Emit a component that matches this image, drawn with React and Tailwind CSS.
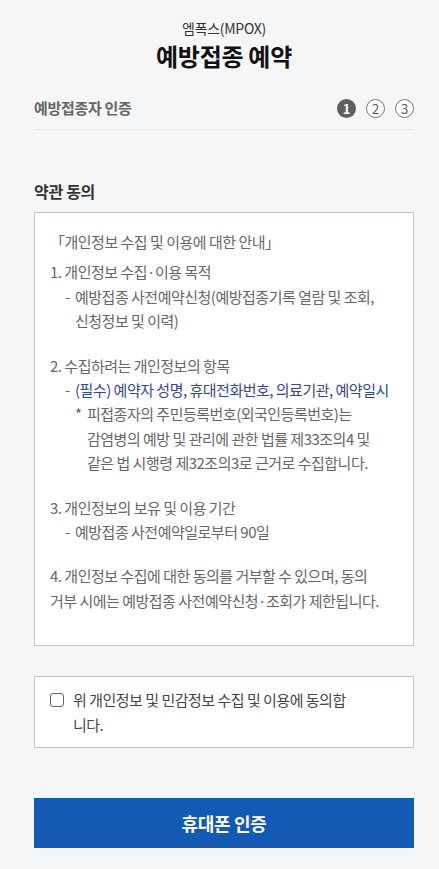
import React from "react";

const font = { fontFamily: '"Noto Sans CJK KR", "Noto Sans", sans-serif' };

function Step({ n, active }) {
  return active ? (
    <span className="flex h-[19px] w-[19px] items-center justify-center rounded-full bg-[#5f5f5f] text-[13px] font-bold leading-none text-white">
      {n}
    </span>
  ) : (
    <span className="flex h-[19px] w-[19px] items-center justify-center rounded-full border border-[#777] bg-white text-[13px] leading-none text-[#555]">
      {n}
    </span>
  );
}

export default function App() {
  return (
    <div
      className="min-h-[869px] w-full bg-[#f5f6f8] pb-[21px] pl-[34px] pr-[25px] pt-[18px] text-[#555]"
      style={font}
    >
      <div className="flex flex-col items-center">
        <div className="text-[14px] leading-[20px] tracking-[-0.3px] text-[#333]">엠폭스(MPOX)</div>
        <h1 className="mt-[3px] text-[24px] font-bold leading-[30px] tracking-[-0.3px] text-[#111]">예방접종 예약</h1>
      </div>

      <div className="mt-[27px] flex items-center justify-between border-b border-[#e3e6eb] pb-[11px]">
        <div className="text-[15px] font-bold leading-[20px] tracking-[-0.3px] text-[#666]">예방접종자 인증</div>
        <div className="flex items-center gap-[10px]">
          <Step n="1" active />
          <Step n="2" />
          <Step n="3" />
        </div>
      </div>

      <h2 className="mt-[50px] text-[16px] font-bold leading-[22px] tracking-[-0.3px] text-[#333]">약관 동의</h2>

      <div className="mt-[10px] h-[434px] whitespace-nowrap border border-[#c6c8cd] bg-white px-[15px] pt-[17px] text-[15px] leading-[24.4px] tracking-[-0.5px] text-[#666]">
        <p>「개인정보 수집 및 이용에 대한 안내」</p>
        <div className="mt-[6px]">
          <p>1. 개인정보 수집·이용 목적</p>
          <div className="flex pl-[15px]">
            <span className="w-[10px] shrink-0">-</span>
            <p>
              예방접종 사전예약신청(예방접종기록 열람 및 조회,
              <br />
              신청정보 및 이력)
            </p>
          </div>
        </div>
        <div className="mt-[20px]">
          <p>2. 수집하려는 개인정보의 항목</p>
          <div className="flex pl-[15px]">
            <span className="w-[10px] shrink-0">-</span>
            <p className="text-[#34478a]">(필수) 예약자 성명, 휴대전화번호, 의료기관, 예약일시</p>
          </div>
          <div className="flex pl-[25px]">
            <span className="w-[12px] shrink-0">*</span>
            <p>
              피접종자의 주민등록번호(외국인등록번호)는
              <br />
              감염병의 예방 및 관리에 관한 법률 제33조의4 및
              <br />
              같은 법 시행령 제32조의3로 근거로 수집합니다.
            </p>
          </div>
        </div>
        <div className="mt-[20px]">
          <p>3. 개인정보의 보유 및 이용 기간</p>
          <div className="flex pl-[15px]">
            <span className="w-[10px] shrink-0">-</span>
            <p>예방접종 사전예약일로부터 90일</p>
          </div>
        </div>
        <p className="mt-[20px]">
          4. 개인정보 수집에 대한 동의를 거부할 수 있으며, 동의
          <br />
          거부 시에는 예방접종 사전예약신청·조회가 제한됩니다.
        </p>
      </div>

      <div className="mt-[30px] border border-[#c6c8cd] bg-white pb-[10px] pl-[15px] pr-[15px] pt-[11px]">
        <label className="flex items-start">
          <span className="mt-[5px] h-[14px] w-[14px] shrink-0 rounded-[3px] border border-[#666] bg-white" />
          <span className="ml-[9px] whitespace-nowrap text-[15px] leading-[24.5px] tracking-[-0.5px] text-[#444]">
            위 개인정보 및 민감정보 수집 및 이용에 동의합
            <br />
            니다.
          </span>
        </label>
      </div>

      <button className="mt-[50px] flex h-[50px] w-full items-center justify-center bg-[#1459b3] text-[18px] font-bold tracking-[-0.3px] text-white">
        휴대폰 인증
      </button>
    </div>
  );
}
